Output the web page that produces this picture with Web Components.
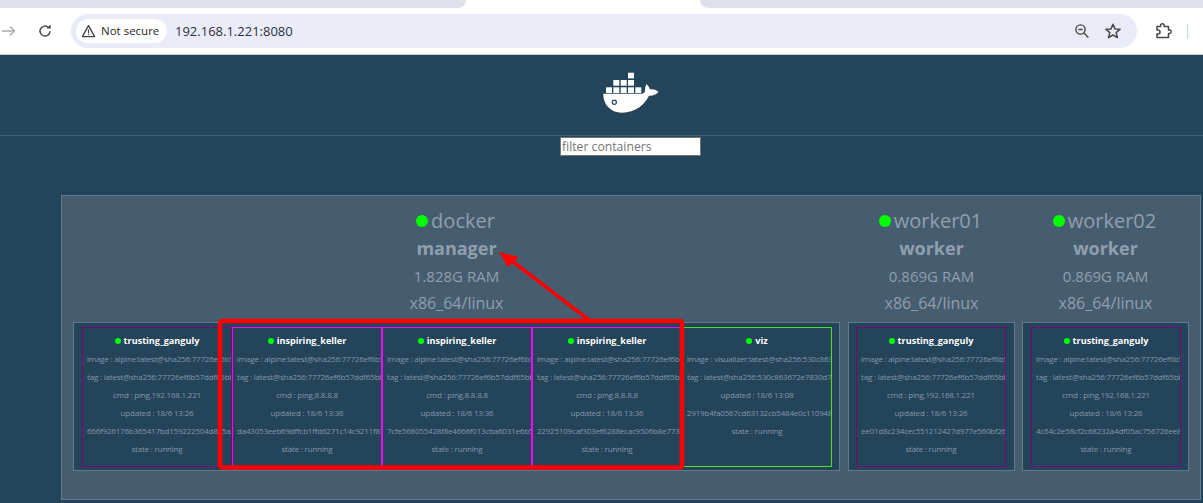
<!DOCTYPE html>
<html>
<head>
<meta charset="utf-8">
<title>Visualizer</title>
<style>
html, body { margin: 0; padding: 0; height: 503px; overflow: hidden; background: #24445a; font-family: "Open Sans", sans-serif; }
</style>
</head>
<body>
<browser-bar url="192.168.1.221:8080"></browser-bar>
<page-header></page-header>
<swarm-panel>
    <swarm-node name="docker" role="manager" ram="1.828G RAM" arch="x86_64/linux">
        <swarm-task name="trusting_ganguly" color="#800080" image="alpine:latest@sha256:77726ef6b5" tag="latest@sha256:77726ef6b57ddf65bb" cmd="ping,192.168.1.221" updated="18/6 13:26" cid="666f926176b365417bd159222504d875a3"></swarm-task>
        <swarm-task name="inspiring_keller" color="#ff00ff" image="alpine:latest@sha256:77726ef6b5" tag="latest@sha256:77726ef6b57ddf65bb" cmd="ping,8.8.8.8" updated="18/6 13:36" cid="da43053eeb69dffcb1ffd6271c14c9211f87"></swarm-task>
        <swarm-task name="inspiring_keller" color="#ff00ff" image="alpine:latest@sha256:77726ef6b5" tag="latest@sha256:77726ef6b57ddf65bb" cmd="ping,8.8.8.8" updated="18/6 13:36" cid="7cfe568055428f8e4666f013cba6031e6b5"></swarm-task>
        <swarm-task name="inspiring_keller" color="#ff00ff" image="alpine:latest@sha256:77726ef6b5" tag="latest@sha256:77726ef6b57ddf65bb" cmd="ping,8.8.8.8" updated="18/6 13:36" cid="22925109caf303ef6288ecac9506b8e7733"></swarm-task>
        <swarm-task name="viz" color="#55dd22" image="visualizer:latest@sha256:530c863" tag="latest@sha256:530c863672e7830d75" updated="18/6 13:08" cid="2919b4fa0567cd63132cb5484e0c1109483"></swarm-task>
    </swarm-node>
    <swarm-node name="worker01" role="worker" ram="0.869G RAM" arch="x86_64/linux" style="--pad-left: 7px; --pad-right: 8px">
        <swarm-task name="trusting_ganguly" color="#800080" image="alpine:latest@sha256:77726ef6b5" tag="latest@sha256:77726ef6b57ddf65bb" cmd="ping,192.168.1.221" updated="18/6 13:26" cid="ee01d8c234cec551212427d977e560bf261"></swarm-task>
    </swarm-node>
    <swarm-node name="worker02" role="worker" ram="0.869G RAM" arch="x86_64/linux" style="margin-left: -1px">
        <swarm-task name="trusting_ganguly" color="#800080" image="alpine:latest@sha256:77726ef6b5" tag="latest@sha256:77726ef6b57ddf65bb" cmd="ping,192.168.1.221" updated="18/6 13:26" cid="4c64c2e58cf2c68232a4df05ac756726ee80"></swarm-task>
    </swarm-node>
</swarm-panel>
<red-callout></red-callout>

<script>
class BrowserBar extends HTMLElement {
    constructor(){
        super()
        this.attachShadow({mode: "open"})
    }
    connectedCallback() {
        this.shadowRoot.innerHTML = `<style>
        :host{ display: block; height: 55px; background: #fff; font-family: "Open Sans", sans-serif; }
        .tabs{ height: 8px; display: flex; justify-content: space-between; }
        .tab{ height: 8px; background: #dee1e9; }
        .tab.left{ width: 466px; border-bottom-right-radius: 8px; }
        .tab.right{ width: 503px; border-bottom-left-radius: 8px; }
        .bar{ height: 46px; box-sizing: border-box; display: flex; align-items: center; }
        .nav{ display: flex; align-items: center; width: 71px; flex: none; }
        .nav svg{ display: block; flex: none; }
        .omni{ flex: none; width: 1066px; height: 34px; margin-top: -1px; box-sizing: border-box; background: #e9ecf6; border-radius: 17px; display: flex; align-items: center; padding-left: 5px; }
        .chip{ height: 24px; width: 91px; background: #fff; border-radius: 12px; display: flex; align-items: center; gap: 5px; box-sizing: border-box; padding-left: 5px; font-size: 11.5px; color: #1f1f1f; flex: none; }
        .url{ margin-left: 8px; font-size: 13px; color: #29303f; flex: 1; }
        .acts{ display: flex; align-items: center; gap: 14px; margin-right: 15px; }
        .ext{ margin-left: 18px; display: flex; }
        .sep{ margin-left: 15px; width: 1px; height: 15px; background: #c2d6f4; }
        .rule{ height: 1px; background: #c7cbd1; }
        </style>
        <div class="tabs"><div class="tab left"></div><div class="tab right"></div></div>
        <div class="bar">
            <div class="nav">
                <svg width="16" height="16" viewBox="0 0 16 16" style="margin-left:1px"><path d="M1 8h12M9 3.5 13.5 8 9 12.5" fill="none" stroke="#a9abae" stroke-width="1.4"/></svg>
                <svg width="16" height="16" viewBox="0 0 16 16" style="margin-left:20px"><path d="M13 8.2A5 5 0 1 1 11.4 4.4" fill="none" stroke="#474747" stroke-width="1.5"/><path d="M9.4 5.6h4.3V1.4z" fill="#474747"/></svg>
            </div>
            <div class="omni">
                <div class="chip">
                    <svg width="15" height="14" viewBox="0 0 15 14"><path d="M7.5 1.6 13.6 12.6H1.4z" fill="none" stroke="#474747" stroke-width="1.4" stroke-linejoin="round"/><path d="M7.5 5.4v3.6M7.5 9.8v1.2" stroke="#474747" stroke-width="1.2"/></svg>
                    <span>Not secure</span>
                </div>
                <div class="url">${this.getAttribute('url')}</div>
                <div class="acts">
                    <svg width="16" height="16" viewBox="0 0 16 16"><circle cx="6.5" cy="6.5" r="4.6" fill="none" stroke="#474747" stroke-width="1.4"/><path d="M4.4 6.5h4.2M10 10l4.4 4.4" stroke="#474747" stroke-width="1.4"/></svg>
                    <svg width="18" height="18" viewBox="0 0 18 18"><path d="M9 2.2l2 4.7 5.1.4-3.9 3.3 1.2 5L9 13 4.600 15.600l1.200-5L1.900 7.300 7 6.900z" fill="none" stroke="#474747" stroke-width="1.5" stroke-linejoin="round"/></svg>
                </div>
            </div>
            <div class="ext">
                <svg width="17" height="18" viewBox="0 0 17 18"><path d="M2 4.500H5.600V3.500a1.800 1.800 0 0 1 3.600 0V4.500H13.500V8H14.500a1.700 1.700 0 0 1 0 3.400H13.500V15.500H2V12H3a2 2 0 0 0 0-4H2z" fill="none" stroke="#474747" stroke-width="1.5" stroke-linejoin="round"/></svg>
            </div>
            <div class="sep"></div>
        </div>
        <div class="rule"></div>`
    }
}
customElements.define('browser-bar', BrowserBar);

class PageHeader extends HTMLElement {
    constructor(){
        super()
        this.attachShadow({mode: "open"})
    }
    connectedCallback() {
        this.shadowRoot.innerHTML = `<style>
        :host{ display: block; }
        .logo{ height: 80px; padding-left: 59px; display: flex; justify-content: center; align-items: flex-start; box-sizing: border-box; padding-top: 16px; }
        .logo svg{ display: block; }
        hr{ margin: 0; border: 0; height: 1px; background: #3f5e73; }
        .filter{ padding-left: 58px; display: flex; justify-content: center; margin-top: 1px; }
        input{ width: 141px; height: 19px; box-sizing: border-box; border: 1px solid #767676; border-radius: 0; padding: 0 1px; margin: 0; background: #fff; font: 12.2px "Open Sans", sans-serif; color: #333; }
        input::placeholder{ color: #757575; opacity: 1; }
        </style>
        <div class="logo">
            <svg width="60" height="44" viewBox="0 0 60 44">
                <g fill="#fff">
                    <rect x="5" y="16.300" width="6" height="5.700"/><rect x="12.300" y="16.300" width="6" height="5.700"/><rect x="19.700" y="16.300" width="6" height="5.700"/><rect x="27" y="16.300" width="6" height="5.700"/><rect x="34.300" y="16.300" width="6" height="5.700"/>
                    <rect x="12.300" y="9" width="6" height="5.700"/><rect x="19.700" y="9" width="6" height="5.700"/><rect x="27" y="9" width="6" height="5.700"/>
                    <rect x="27" y="1.700" width="6" height="5.700"/>
                    <path d="M2.300 22.800H41C42.500 22.800 44 21.500 44 19C44 17 44.500 15 45.500 13C47 14.500 48.500 16.500 49 18.500C51.500 17.800 54.500 18.500 57.500 20.700C55.500 23.500 52 25 48 24.800C43.500 34 34 41.700 21 41.700C9 41.700 2 33 2.300 22.800Z"/>
                </g>
                <circle cx="13.300" cy="31.300" r="2.100" fill="#fff" stroke="#24445a" stroke-width="1.200"/>
            </svg>
        </div>
        <hr>
        <div class="filter"><input placeholder="filter containers"></div>`
    }
}
customElements.define('page-header', PageHeader);

class SwarmPanel extends HTMLElement {
    constructor(){
        super()
        this.attachShadow({mode: "open"})
    }
    connectedCallback() {
        this.shadowRoot.innerHTML = `<style>
        :host{ display: flex; gap: 8px; box-sizing: border-box; margin: 39px 0 0 61px; width: 1140px; height: 305px; padding: 11px 12px 0 11px; background: #465d70; border: 1px solid #5d7a8f; }
        </style><slot></slot>`
    }
}
customElements.define('swarm-panel', SwarmPanel);

class SwarmNode extends HTMLElement {
    constructor(){
        super()
        this.attachShadow({mode: "open"})
    }
    connectedCallback() {
        this.shadowRoot.innerHTML = `<style>
        :host{ display: block; flex: none; color: #8f9fad; font-family: "Open Sans", sans-serif; text-align: center; }
        .name{ font-size: 20px; line-height: 28px; display: flex; justify-content: center; align-items: center; gap: 3px; padding-right: 2px; }
        .dot{ width: 12px; height: 12px; border-radius: 50%; background: #00ff00; flex: none; }
        .role{ font-size: 18px; line-height: 26px; font-weight: 700; }
        .ram{ font-size: 15px; line-height: 26px; margin-top: 2px; }
        .arch{ font-size: 16px; line-height: 26px; margin-top: 1px; }
        .tasks{ display: flex; margin-top: 6px; padding: 4px var(--pad-right, 7px) 3px var(--pad-left, 8px); height: 140px; background: #24445a; border: 1px solid #5d7a8f; }
        </style>
        <div class="name"><span class="dot"></span><span>${this.getAttribute('name')}</span></div>
        <div class="role">${this.getAttribute('role')}</div>
        <div class="ram">${this.getAttribute('ram')}</div>
        <div class="arch">${this.getAttribute('arch')}</div>
        <div class="tasks"><slot></slot></div>`
    }
}
customElements.define('swarm-node', SwarmNode);

class SwarmTask extends HTMLElement {
    constructor(){
        super()
        this.attachShadow({mode: "open"})
    }
    _row(label, value){
        return value ? `<div class="row">${label} : ${value}</div>` : ''
    }
    connectedCallback() {
        let color = this.getAttribute('color')
        let cid = this.getAttribute('cid')
        this.shadowRoot.innerHTML = `<style>
        :host{ display: block; flex: none; width: 150px; height: 140px; box-sizing: border-box; border: 1px solid ${color}; padding: 4px 4px 0; overflow: hidden; font-family: "Open Sans", sans-serif; text-align: center; }
        .title{ font-size: 9.100px; font-weight: 700; color: #fff; line-height: 18px; display: flex; justify-content: center; align-items: center; gap: 3px; }
        .dot{ width: 6px; height: 6px; border-radius: 50%; background: #00ff00; flex: none; }
        .row{ font-size: 8px; letter-spacing: -0.2px; line-height: 18px; color: #8298a9; white-space: nowrap; }
        </style>
        <div class="title"><span class="dot"></span><span>${this.getAttribute('name')}</span></div>
        ${this._row('image', this.getAttribute('image'))}
        ${this._row('tag', this.getAttribute('tag'))}
        ${this._row('cmd', this.getAttribute('cmd'))}
        ${this._row('updated', this.getAttribute('updated'))}
        <div class="row">${cid}</div>
        ${this._row('state', 'running')}`
    }
}
customElements.define('swarm-task', SwarmTask);

// the red box and arrow someone drew over the screenshot
class RedCallout extends HTMLElement {
    constructor(){
        super()
        this.attachShadow({mode: "open"})
    }
    connectedCallback() {
        this.shadowRoot.innerHTML = `<style>
        :host{ display: block; position: absolute; left: 0; top: 0; width: 1203px; height: 503px; pointer-events: none; }
        svg{ display: block; }
        </style>
        <svg width="1203" height="503">
            <rect x="220" y="321" width="462" height="146.500" rx="2" fill="none" stroke="#ff0000" stroke-width="4.500"/>
            <path d="M589 320 512 261" stroke="#ff0000" stroke-width="3.500" fill="none"/>
            <path d="M499 252 519 257 508 267z" fill="#ff0000"/>
        </svg>`
    }
}
customElements.define('red-callout', RedCallout);
</script>
</body>
</html>
